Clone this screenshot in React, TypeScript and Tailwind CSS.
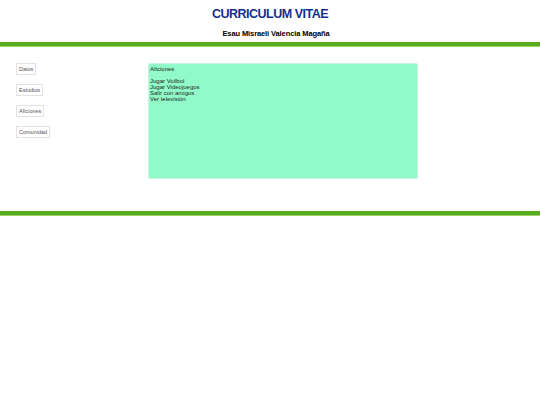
export default function App() {
  const tabs = ["Datos", "Estudios", "Aficiones", "Comunidad"];

  return (
    <div className="min-h-[405px] w-[540px] bg-white font-['Liberation_Sans',Arial,sans-serif]">
      <header className="pt-[7px] text-center">
        <h1 className="text-[12.5px] font-bold leading-[14px] tracking-[-0.5px] text-[#142f8c]">
          CURRICULUM VITAE
        </h1>
        <p className="mt-[8px] pl-[12px] text-[7.5px] font-bold leading-[9px] tracking-[-0.1px] text-black">
          Esau Misraeli Valencia Magaña
        </p>
      </header>
      <div className="mt-[4px] h-[5px] border-b border-[#9bd66a] bg-[#5aaa1f]" />

      <main className="flex items-start pt-[16px] pb-[32px]">
        <nav className="flex w-[148px] flex-col items-start gap-[9px] pl-[16px]">
          {tabs.map((t) => (
            <button
              key={t}
              className="h-[12px] border border-[#e2e2e2] bg-white px-[2px] text-[5.5px] leading-[10px] text-[#555]"
            >
              {t}
            </button>
          ))}
        </nav>
        <section className="h-[116px] w-[270px] rounded-[2px] border border-[#c8f5e0] bg-[#92f9c9] px-[1px] pt-[2px] text-[6px] leading-[6px] text-[#1a2a1a]">
          <p>Aficiones</p>
          <ul className="mt-[6px]">
            <li>Jugar Voilbol</li>
            <li>Jugar Videojuegos</li>
            <li>Salir con amigos</li>
            <li>Ver televisión</li>
          </ul>
        </section>
      </main>

      <div className="h-[5px] border-b border-[#9bd66a] bg-[#5aaa1f]" />
    </div>
  );
}
